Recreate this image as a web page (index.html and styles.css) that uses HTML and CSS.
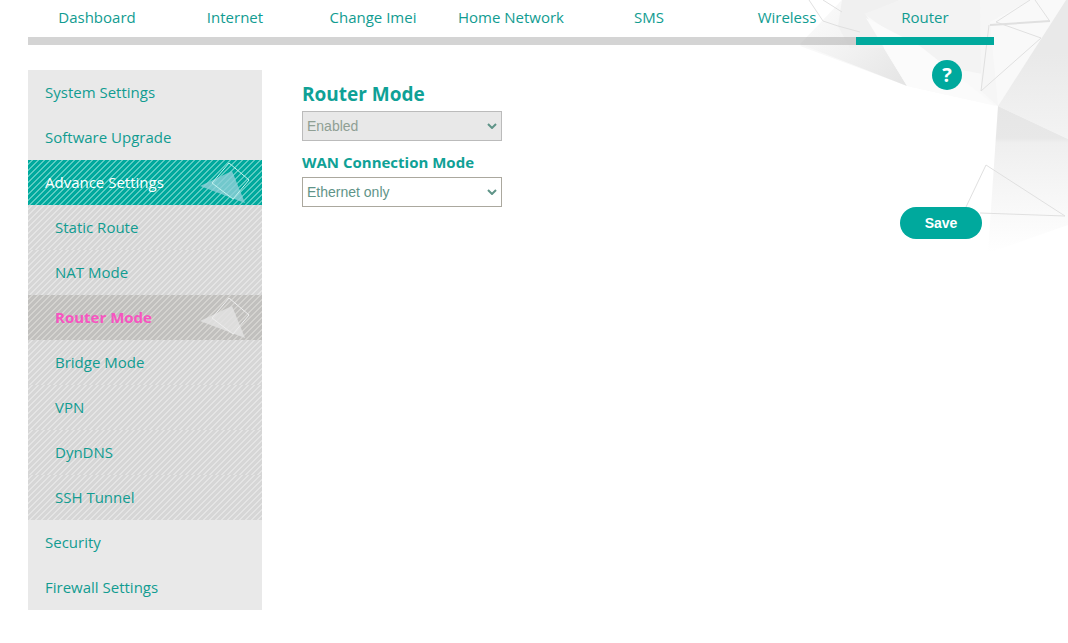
FILE: index.html
```html
<!DOCTYPE html>
<html lang="en">
<head>
  <meta charset="UTF-8" />
  <meta name="viewport" content="width=device-width, initial-scale=1.0"/>
  <title>Router Settings</title>
  <link rel="stylesheet" href="styles.css">
</head>
<body>
  <!-- Page background -->
  <svg class="page-bg" width="290" height="260" viewBox="778 0 290 260" aria-hidden="true">
    <defs>
      <linearGradient id="wing" x1="0" y1="0" x2="1" y2="1">
        <stop offset="0" stop-color="#fdfdfd"/>
        <stop offset="0.5" stop-color="#f2f2f2"/>
        <stop offset="1" stop-color="#e4e4e4"/>
      </linearGradient>
      <linearGradient id="side" x1="0" y1="0" x2="0" y2="1">
        <stop offset="0" stop-color="#e6e6e6"/>
        <stop offset="0.22" stop-color="#e8e8e8"/>
        <stop offset="0.25" stop-color="#efefef"/>
        <stop offset="1" stop-color="#ffffff"/>
      </linearGradient>
      <linearGradient id="corner" x1="0" y1="0" x2="0" y2="1">
        <stop offset="0" stop-color="#e9e9e9"/>
        <stop offset="0.38" stop-color="#e9e9e9"/>
        <stop offset="1" stop-color="#f3f3f3"/>
      </linearGradient>
    </defs>
    <path fill="#f9f9f9" d="M842 0H1066L998 106L907 86L800 46Z"/>
    <path fill="url(#wing)" d="M842 0L864 16L907 86L800 44Z"/>
    <path fill="#f0f0f0" d="M842 0H900L866 15L886 48H850L838 26Z"/>
    <path fill="#f3f3f3" d="M864 14L900 0H980L988 75L940 66Z"/>
    <path fill="#fbfbfb" d="M866 18L920 46L996 106L907 86Z"/>
    <path fill="#f6f6f6" d="M980 0H1030L990 22L998 106L981 91Z"/>
    <path fill="url(#corner)" d="M1066 0H1068V139L998 106Z"/>
    <path fill="url(#side)" d="M998 106L1068 139V225L988 253Z"/>
    <g fill="none" stroke="#e0e0e0">
      <path d="M809 0L823 21L838 26L860 32M823 0L842 12"/>
      <path d="M1030 0L996 22L1041 38L981 91L989 25M1035 0L1049 20"/>
      <path stroke-width="2" d="M990 25L1050 21"/>
      <path d="M966 207L986 165L1065 216L980 213"/>
    </g>
  </svg>

  <div class="container">
    <nav class="top-menu">
      <a href="#">Dashboard</a>
      <a href="#">Internet</a>
      <a href="#">Change Imei</a>
      <a href="#">Home Network</a>
      <a href="#">SMS</a>
      <a href="#">Wireless</a>
      <a href="#" class="active">Router</a>
    </nav>

    <div class="main">
      <nav class="side-menu">
        <a href="#">System Settings</a>
        <a href="#">Software Upgrade</a>
        <a href="#" class="open">Advance Settings
          <svg class="mark" width="50" height="43" viewBox="0 0 50 43" aria-hidden="true">
            <path class="mark-fill" d="M0 25L32 10L45 42Z"/>
            <path class="mark-line" d="M29 2L49 19L33 38L12 22Z"/>
          </svg>
        </a>
        <div class="sub-menu">
          <a href="#">Static Route</a>
          <a href="#">NAT Mode</a>
          <a href="#" class="current">Router Mode
            <svg class="mark" width="50" height="43" viewBox="0 0 50 43" aria-hidden="true">
              <path class="mark-fill" d="M0 25L32 10L45 42Z"/>
              <path class="mark-line" d="M29 2L49 19L33 38L12 22Z"/>
            </svg>
          </a>
          <a href="#">Bridge Mode</a>
          <a href="#">VPN</a>
          <a href="#">DynDNS</a>
          <a href="#">SSH Tunnel</a>
        </div>
        <a href="#">Security</a>
        <a href="#">Firewall Settings</a>
      </nav>

      <form class="content">
        <div class="fields">
          <label for="router-mode" class="title">Router Mode</label>
          <div class="select-box disabled">
            <select id="router-mode" disabled>
              <option>Enabled</option>
            </select>
            <svg class="arrow" width="10" height="6" viewBox="0 0 10 6" aria-hidden="true"><path d="M1 1L5 5L9 1"/></svg>
          </div>
          <label for="wan-mode">WAN Connection Mode</label>
          <div class="select-box">
            <select id="wan-mode">
              <option>Ethernet only</option>
            </select>
            <svg class="arrow" width="10" height="6" viewBox="0 0 10 6" aria-hidden="true"><path d="M1 1L5 5L9 1"/></svg>
          </div>
        </div>
        <div class="actions">
          <button type="button" class="help-button" aria-label="Help">?</button>
          <button type="submit" class="save-button">Save</button>
        </div>
      </form>
    </div>
  </div>
</body>
</html>
```
FILE: styles.css
```css
* { margin: 0; padding: 0; box-sizing: border-box; }

body {
  font-family: 'Segoe UI', 'Open Sans', 'Noto Sans', sans-serif;
  font-size: 15px;
  background-color: #fff;
  color: #0fa196;
}

a { color: #119c91; text-decoration: none; }

.page-bg {
  position: absolute;
  top: 0;
  right: 0;
  z-index: -1;
}

.container { padding: 0 74px 0 28px; }

/* Top menu */
.top-menu { display: flex; }

.top-menu a {
  flex: 1;
  height: 45px;
  line-height: 34px;
  text-align: center;
  border-bottom: 8px solid rgba(170, 170, 170, 0.5);
}

.top-menu a.active { border-bottom-color: #00a99d; }

.main {
  display: flex;
  align-items: flex-start;
  gap: 40px;
}

/* Side menu */
.side-menu {
  flex: 0 0 234px;
  margin-top: 25px;
  background-color: #e9e9e9;
}

.side-menu a {
  display: flex;
  justify-content: space-between;
  height: 45px;
  line-height: 45px;
  padding: 0 12px 0 17px;
}

.side-menu a.open,
.sub-menu a {
  background-image: linear-gradient(135deg, transparent 0 33%, var(--stripe) 33% 50%, transparent 50% 83%, var(--stripe) 83%);
  background-size: 6px 6px;
}

.side-menu a.open {
  --stripe: #5cccc2;
  color: #fff;
  background-color: #00a99d;
}

.sub-menu a {
  --stripe: #e4e4e4;
  padding-left: 27px;
  background-color: #d6d6d6;
}

.sub-menu a.current {
  --stripe: #d4d3d0;
  color: #f655c0;
  font-weight: bold;
  background-color: #c1c0be;
}

.mark { margin-top: 1px; }
.mark-fill { fill: #8fd0d8; fill-opacity: 0.8; }
.mark-line { fill: none; stroke: #c2f2ee; }
.current .mark-fill { fill: #e4e4e4; }
.current .mark-line { stroke: #eee; }

/* Content */
.content {
  flex: 1;
  display: flex;
  justify-content: space-between;
  align-items: flex-start;
}

.fields {
  display: flex;
  flex-direction: column;
  width: 200px;
  padding-top: 36px;
}

.fields label {
  font-weight: bold;
  line-height: 20px;
  padding: 11px 0 5px;
  white-space: nowrap;
}

.fields .title {
  font-size: 19px;
  line-height: 26px;
  padding: 0 0 4px;
}

.select-box {
  display: grid;
  align-items: center;
}

.select-box select {
  grid-area: 1 / 1;
  width: 100%;
  height: 30px;
  padding: 0 4px;
  appearance: none;
  border: 1px solid #aba89e;
  border-radius: 0;
  background-color: #fff;
  color: #5f9488;
  font-family: Arial, 'Liberation Sans', sans-serif;
  font-size: 14px;
}

.select-box.disabled select {
  border-color: #bbb;
  background-color: #e8e8e8;
  color: #8f9f94;
  opacity: 1;
}

.arrow {
  grid-area: 1 / 1;
  justify-self: end;
  margin-right: 5px;
  fill: none;
  stroke: #5f9488;
  stroke-width: 2;
  pointer-events: none;
}

.actions {
  display: flex;
  flex-direction: column;
  align-items: flex-end;
  gap: 117px;
  padding: 15px 12px 0 0;
}

.help-button {
  width: 30px;
  height: 30px;
  margin-right: 20px;
  border: none;
  border-radius: 50%;
  background-color: #00a99d;
  color: #fff;
  font-family: inherit;
  font-size: 20px;
  font-weight: bold;
  line-height: 30px;
  cursor: pointer;
}

.save-button {
  width: 82px;
  height: 32px;
  border: none;
  border-radius: 16px;
  background-color: #00a99d;
  color: #fff;
  font-family: Arial, 'Liberation Sans', sans-serif;
  font-size: 14px;
  font-weight: bold;
  cursor: pointer;
}
```
